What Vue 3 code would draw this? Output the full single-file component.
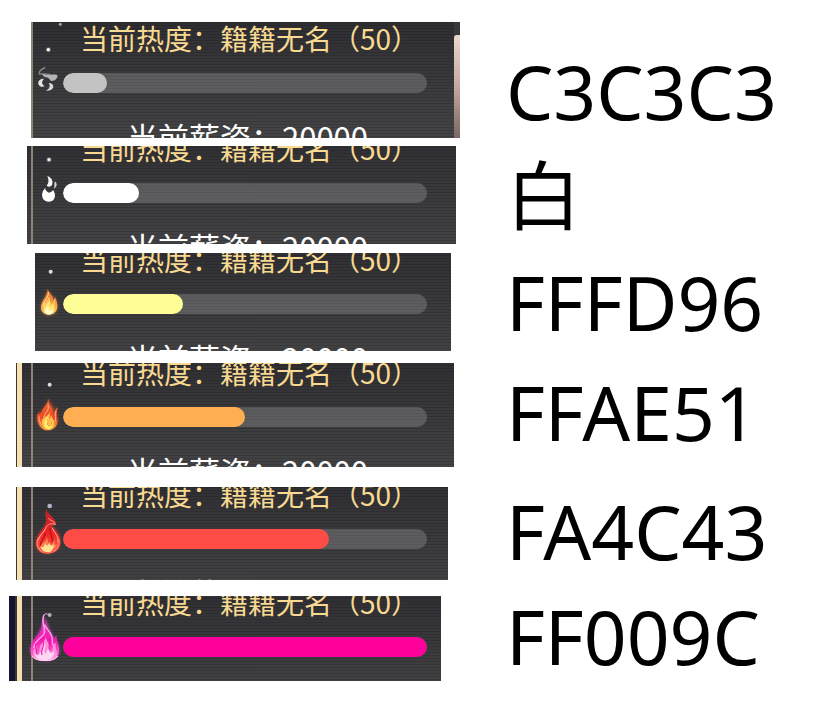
<script setup>
const levels = [
  { id: 'smoke', code: 'C3C3C3', color: '#c3c3c3', percent: 12, view: '87 189 102 60' },
  { id: 'white', code: '白', color: '#ffffff', percent: 21, view: '87 130 102 60' },
  { id: 'yellow', code: 'FFFD96', color: '#fffd96', percent: 33, view: '87 147 102 60' },
  { id: 'orange', code: 'FFAE51', color: '#ffae51', percent: 50, view: '87 151 102 60' },
  { id: 'red', code: 'FA4C43', color: '#ff4c46', percent: 73, view: '87 147 102 60' },
  { id: 'magenta', code: 'FF009C', color: '#ff009c', percent: 100, view: '87 141 102 60' },
]
</script>

<template>
  <main class="board">
    <section v-for="level in levels" :key="level.id" class="row" :class="level.id">
      <div class="panel">
        <div class="scene">
          <p class="heat">当前热度：籍籍无名（50）</p>
          <div class="meter">
            <svg class="icon" :viewBox="level.view" aria-hidden="true">
              <defs>
                <filter :id="'soft-' + level.id" x="-50%" y="-50%" width="200%" height="200%">
                  <feGaussianBlur stdDeviation="1.6" />
                </filter>
                <filter :id="'glow-' + level.id" x="-50%" y="-50%" width="200%" height="200%">
                  <feGaussianBlur stdDeviation="4" />
                </filter>
                <linearGradient id="fire-yellow" x1="0" y1="0" x2="0" y2="1">
                  <stop offset="0" stop-color="#f3642c" />
                  <stop offset=".55" stop-color="#f79a35" />
                  <stop offset="1" stop-color="#ffd766" />
                </linearGradient>
                <linearGradient id="fire-orange" x1="0" y1="0" x2="0" y2="1">
                  <stop offset="0" stop-color="#f26a3c" />
                  <stop offset=".6" stop-color="#ee4a23" />
                  <stop offset="1" stop-color="#ffa43b" />
                </linearGradient>
                <linearGradient id="fire-red" x1="0" y1="0" x2="0" y2="1">
                  <stop offset="0" stop-color="#b8232b" />
                  <stop offset=".55" stop-color="#ef2525" />
                  <stop offset="1" stop-color="#ff6a4a" />
                </linearGradient>
                <linearGradient id="fire-magenta" x1="0" y1="0" x2="0" y2="1">
                  <stop offset="0" stop-color="#e44ccb" />
                  <stop offset=".55" stop-color="#f21bb0" />
                  <stop offset="1" stop-color="#ff8adb" />
                </linearGradient>
              </defs>

              <template v-if="level.id === 'smoke'">
                <g :filter="'url(#soft-' + level.id + ')'">
                  <circle cx="145" cy="119" r="8" fill="#777" opacity=".6" />
                  <circle cx="145" cy="119" r="5" fill="#fff" />
                  <circle cx="181" cy="43" r="5" fill="#999" />
                  <path d="M136 172C122 179 115 186 118 192C130 190 141 193 151 193" fill="none" stroke="#8a8a8a" stroke-width="4" />
                  <path d="M128 191C144 198 155 190 172 195C174 204 165 213 155 213C148 212 150 204 138 202C131 200 126 197 128 191Z" fill="#b4b4b4" />
                  <path d="M132 206C119 205 112 215 116 224C119 230 127 232 134 228C126 224 123 216 132 206Z" fill="#e4e4e4" />
                  <path d="M146 219C155 219 161 224 160 232C157 239 150 243 138 242C147 237 153 229 146 219Z" fill="#d6d6d6" />
                </g>
              </template>

              <template v-else-if="level.id === 'white'">
                <g :filter="'url(#soft-' + level.id + ')'">
                  <circle cx="147" cy="60" r="8" fill="#888" opacity=".5" />
                  <circle cx="147" cy="60" r="5" fill="#eee" />
                  <path d="M142 109C157 115 160 126 156 136C152 143 144 142 140 138C147 130 147 120 142 109Z" fill="#f5f5f5" />
                  <path d="M165 125C173 132 171 142 162 147C165 138 161 134 165 125Z" fill="#d5d5d5" />
                  <path d="M136 145C126 154 124 167 129 177C136 189 156 189 162 178C169 167 162 155 159 151C157 156 152 158 147 159C140 156 135 152 136 145Z" fill="#fff" />
                </g>
              </template>

              <template v-else-if="level.id === 'yellow'">
                <circle cx="152" cy="80" r="6" fill="#ddd" :filter="'url(#soft-' + level.id + ')'" />
                <path d="M143 134C139 158 122 168 123 188C125 216 169 218 172 188C174 173 163 158 157 150L157 163C157 152 147 142 143 134Z" fill="#f7a24b" opacity=".5" :filter="'url(#glow-' + level.id + ')'" />
                <path d="M143 132C142 156 122 168 123 189C125 216 169 217 172 187C173 174 168 162 165 155C164 162 161 166 159 169C163 153 147 145 143 132Z" fill="url(#fire-yellow)" />
                <path d="M145 142C147 157 130 167 129 184C136 174 144 170 148 157M164 164C160 171 165 180 160 187" fill="none" stroke="#ffe6a0" stroke-width="3" />
                <path d="M148 161C148 174 130 177 131 194C133 213 160 213 163 195C165 185 158 181 157 172C155 180 153 184 151 185C154 176 150 168 148 161Z" fill="#ffe56f" />
                <path d="M144 183C135 190 132 200 141 207C150 212 161 204 157 193C153 196 149 199 147 197C149 190 146 188 144 183Z" fill="#fffbd0" />
              </template>

              <template v-else-if="level.id === 'orange'">
                <circle cx="149" cy="84" r="6" fill="#ddd" :filter="'url(#soft-' + level.id + ')'" />
                <path d="M145 125C145 150 113 165 111 183C110 230 179 230 173 185C174 165 156 150 145 125Z" fill="#e65424" opacity=".6" :filter="'url(#glow-' + level.id + ')'" />
                <path d="M144 124C147 142 129 149 125 167C120 176 116 167 112 173C109 184 113 207 128 217C142 226 166 219 171 202C177 187 165 183 174 151C162 159 164 171 159 177C163 154 146 146 144 124Z" fill="url(#fire-orange)" />
                <path d="M144 144C150 160 134 168 131 183M117 179C117 192 121 202 127 206M168 162C162 176 170 185 165 196" fill="none" stroke="#ffb584" stroke-width="3" />
                <path d="M149 166C144 183 124 178 126 199C130 225 162 224 163 201C164 189 155 185 154 174C151 182 149 187 146 190C151 181 149 172 149 166Z" fill="#ffc14c" />
                <path d="M143 180C134 190 127 205 138 215C150 222 160 211 158 197C153 204 147 208 144 203C149 194 145 186 143 180Z" fill="#fff16b" />
                <path d="M141 187C149 194 139 200 145 207C151 210 155 204 156 197" fill="none" stroke="#f9792e" stroke-width="3" />
              </template>

              <template v-else-if="level.id === 'red'">
                <circle cx="149" cy="78" r="7" fill="#aeb5c4" :filter="'url(#soft-' + level.id + ')'" />
                <path d="M140 91C138 120 150 118 132 142C92 190 107 220 143 220C187 218 193 172 159 142Z" fill="#ff4a35" opacity=".6" :filter="'url(#glow-' + level.id + ')'" />
                <path d="M139 88C142 106 163 107 169 132C164 136 159 131 154 139C165 150 181 163 181 187C180 209 164 220 145 221C122 222 107 208 108 185C110 167 129 150 136 135C145 119 132 105 139 88Z" fill="url(#fire-red)" />
                <path d="M145 114C150 123 164 122 166 134C153 129 143 131 137 145" fill="none" stroke="#ff9a85" stroke-width="3" />
                <path d="M137 145C132 157 119 165 114 181M157 143C161 158 176 164 174 188" fill="none" stroke="#ffb59c" stroke-width="3" />
                <path d="M150 144C146 161 160 168 158 189C157 201 149 208 141 216M136 159C134 176 120 180 121 200" fill="none" stroke="#c4141c" stroke-width="5" />
                <path d="M140 169C142 184 125 190 121 200C128 220 160 221 172 193C160 198 164 186 164 178C156 193 150 197 146 201C148 189 142 180 140 169Z" fill="#ff8057" />
                <path d="M135 189C139 200 145 199 148 185C149 199 157 198 162 194C160 208 154 217 143 217C132 217 123 208 121 199C129 205 134 200 135 189Z" fill="#ffe194" />
                <path d="M113 178C109 196 116 210 126 215M177 178C180 197 170 209 162 214" fill="none" stroke="#ff8d80" stroke-width="3" />
              </template>

              <template v-else>
                <path d="M132 75C140 113 91 151 92 183C96 217 168 221 177 188C182 160 155 142 146 112Z" fill="#ef4bd1" opacity=".8" :filter="'url(#glow-' + level.id + ')'" />
                <path d="M133 73C119 98 131 116 117 133C105 145 91 158 92 181C91 200 102 213 133 213C162 213 177 203 177 182C178 160 168 153 170 135C163 143 163 148 160 151C158 128 143 121 134 105C130 96 132 84 133 73Z" fill="url(#fire-magenta)" />
                <path d="M132 74C121 100 140 112 132 132C124 144 104 151 101 174M134 104C144 125 158 128 157 152C155 165 166 170 165 185" fill="none" stroke="#ffa8ea" stroke-width="4" />
                <path d="M134 133C144 151 123 155 119 173C116 185 123 190 113 196C105 187 111 174 109 164C98 177 96 194 107 207C126 216 160 215 170 200C175 184 163 176 168 158C157 165 159 182 151 190C152 167 139 154 134 133Z" fill="#ff91de" />
                <path d="M133 159C141 172 129 176 134 190C139 193 142 182 144 174C147 187 151 193 162 184C163 198 157 208 143 209C124 214 106 207 103 188C114 201 119 197 119 184C125 196 129 180 133 159Z" fill="#ffd7f4" />
                <path d="M128 153C137 166 121 178 126 195M149 146C154 164 143 168 149 180M109 159C103 175 112 180 109 191" fill="none" stroke="#e90aa4" stroke-width="3" />
                <path d="M96 197C103 215 161 218 174 198" fill="none" stroke="#ffd7f1" stroke-width="3" />
                <circle cx="149" cy="75" r="6" fill="#b7aeb5" :filter="'url(#soft-' + level.id + ')'" />
                <path d="M131 76C136 68 143 71 145 76" fill="none" stroke="#f1b6e8" stroke-width="3" />
              </template>
            </svg>
            <div
              class="track"
              role="progressbar"
              aria-label="当前热度"
              :aria-valuenow="level.percent"
              aria-valuemin="0"
              aria-valuemax="100"
            >
              <div class="fill" :style="{ width: level.percent + '%', backgroundColor: level.color }"></div>
            </div>
          </div>
          <p class="salary">当前薪资：20000</p>
        </div>
      </div>
      <div class="code">{{ level.code }}</div>
    </section>
  </main>
</template>

<style>
body {
  margin: 0;
  background: #fff;
}
</style>

<style scoped>
.board {
  padding: 22px 0 40px;
  font-family: "Noto Sans CJK SC", sans-serif;
}

.row {
  display: grid;
  grid-template-columns: 62fr 38fr;
}

.panel {
  height: var(--height);
  margin-left: var(--left);
  margin-right: var(--right);
  overflow: hidden;
  background: #39393b;
}

/* Every panel is a window onto the same scene. */
.scene {
  box-sizing: border-box;
  height: 140px;
  margin: var(--shift) calc(var(--right) * -1) 0 calc(var(--left) * -1);
  padding: 2px 79px 0 29px;
  background:
    linear-gradient(90deg, #15152f 0 15px, #373638 15px 17px, #f6dfb1 17px 22px, transparent 22px 31px, #8f8373 31px 33px, transparent 33px),
    repeating-linear-gradient(180deg, rgba(0, 0, 0, 0.14) 0 1px, transparent 1px 3px),
    linear-gradient(180deg, #2e2e32, #48484a);
}

.heat,
.salary {
  margin: 0;
  white-space: nowrap;
}

.heat {
  padding-left: 51px;
  color: #f8d992;
  font-size: 28px;
  line-height: 34px;
}

.meter {
  display: flex;
  margin: 18px 0 24px;
}

.icon {
  flex: none;
  width: 34px;
  height: 20px;
  overflow: visible;
}

.track {
  flex: 1;
  height: 20px;
  overflow: hidden;
  border-radius: 10px;
  background: rgba(255, 255, 255, 0.18);
}

.fill {
  height: 100%;
  border-radius: 10px;
}

.salary {
  padding-left: 98px;
  color: #fff;
  font-size: 31px;
  line-height: 40px;
}

.code {
  align-self: center;
  color: #000;
  font-family: "Noto Sans", "Noto Sans CJK SC", sans-serif;
  font-size: 75px;
  line-height: 74px;
  white-space: nowrap;
}

.smoke {
  --left: 31px;
  --right: 46px;
  --height: 116px;
  --shift: -3px;
}

.smoke .panel {
  display: flex;
}

.smoke .scene {
  flex: 1;
  margin-right: 0;
  padding-right: 27px;
}

.smoke .panel::after {
  content: "";
  width: 6px;
  margin-top: 13px;
  border-radius: 3px 0 0 0;
  background: linear-gradient(180deg, #ead8d0, #c4a99f 50%, #7b6662);
}

.smoke .code {
  padding-top: 22px;
}

.white {
  --left: 27px;
  --right: 50px;
  --height: 98px;
  --shift: -17px;
  margin-top: 8px;
}

.yellow {
  --left: 35px;
  --right: 55px;
  --height: 98px;
  --shift: -13px;
  margin-top: 9px;
}

.orange {
  --left: 16px;
  --right: 52px;
  --height: 104px;
  --shift: -10px;
  margin-top: 12px;
}

.red {
  --left: 16px;
  --right: 58px;
  --height: 93px;
  --shift: -12px;
  margin-top: 20px;
}

.magenta {
  --left: 9px;
  --right: 65px;
  --height: 85px;
  --shift: -13px;
  margin-top: 16px;
}

.orange .code,
.red .code,
.magenta .code {
  padding-bottom: 6px;
}
</style>
